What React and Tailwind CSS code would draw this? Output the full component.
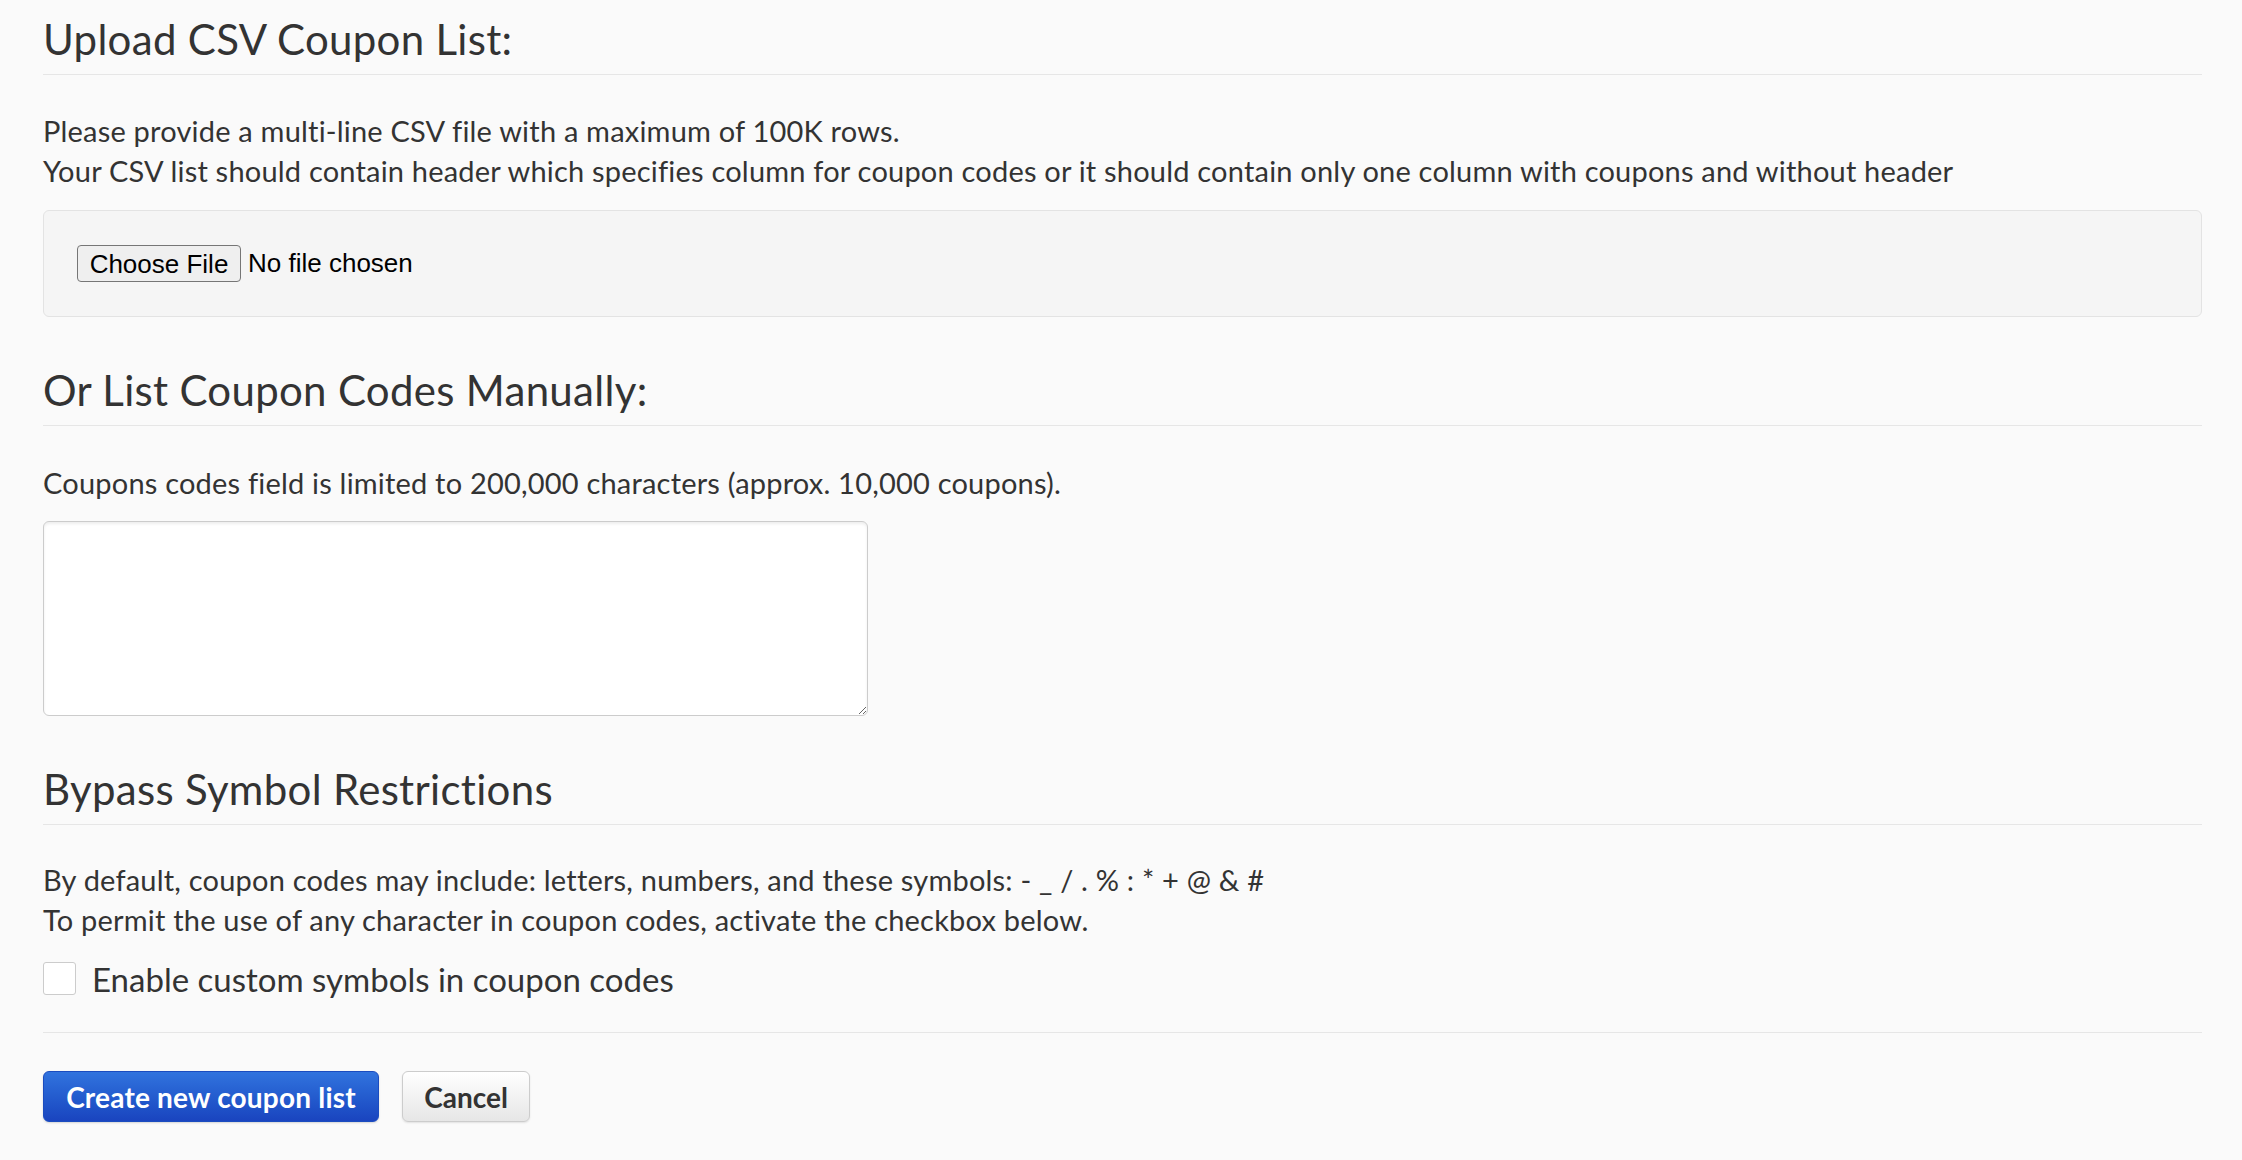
export default function App() {
  const font = { fontFamily: "Lato, 'Open Sans', sans-serif" };
  return (
    <div className="min-h-[1160px] w-full bg-[#fafafa] text-[#333333]" style={font}>
      <div className="pl-[43px] pr-[40px] pt-[17px] pb-[20px]">
        <h2 className="text-[42px] tracking-[0.3px] leading-[44px] font-normal pb-[13px] border-b border-[#e6e6e6]">
          Upload CSV Coupon List:
        </h2>
        <div className="mt-[36px] text-[29px] tracking-[0.2px] leading-[40px]">
          <p>Please provide a multi-line CSV file with a maximum of 100K rows.</p>
          <p>Your CSV list should contain header which specifies column for coupon codes or it should contain only one column with coupons and without header</p>
        </div>
        <div className="mt-[19px] bg-[#f5f5f5] border border-[#e3e3e3] rounded-[6px] px-[33px] py-[33px]">
          <div className="flex items-center h-[39px]" style={{ fontFamily: "'Liberation Sans', Arial, sans-serif" }}>
            <button className="h-[37px] w-[164px] text-[26px] leading-none text-black bg-[#efefef] border border-[#767676] rounded-[4px]">
              Choose File
            </button>
            <span className="ml-[7px] text-[26px] text-black">No file chosen</span>
          </div>
        </div>
        <h2 className="mt-[51px] text-[42px] tracking-[0.3px] leading-[44px] font-normal pb-[13px] border-b border-[#e6e6e6]">
          Or List Coupon Codes Manually:
        </h2>
        <p className="mt-[37px] text-[29px] tracking-[0.2px] leading-[40px]">
          Coupons codes field is limited to 200,000 characters (approx. 10,000 coupons).
        </p>
        <textarea className="block mt-[18px] w-[825px] h-[195px] bg-white border border-[#cccccc] rounded-[6px] shadow-[inset_0_2px_3px_rgba(0,0,0,0.07)] outline-none"></textarea>
        <h2 className="mt-[51px] text-[42px] tracking-[0.3px] leading-[44px] font-normal pb-[13px] border-b border-[#e6e6e6]">
          Bypass Symbol Restrictions
        </h2>
        <div className="mt-[35px] text-[29px] tracking-[0.2px] leading-[40px]">
          <p>By default, coupon codes may include: letters, numbers, and these symbols: - _ / . % : * + @ &amp; #</p>
          <p>To permit the use of any character in coupon codes, activate the checkbox below.</p>
        </div>
        <label className="mt-[22px] flex items-center h-[33px]">
          <span className="w-[33px] h-[33px] bg-white border border-[#cccccc] rounded-[3px] shrink-0"></span>
          <span className="ml-[16px] text-[33px] leading-[40px]">Enable custom symbols in coupon codes</span>
        </label>
        <div className="mt-[37px] border-t border-[#e6e6e6]"></div>
        <div className="mt-[38px] flex items-center gap-[23px]">
          <button className="h-[51px] w-[336px] rounded-[6px] text-white font-bold text-[28px] tracking-[0.2px] bg-gradient-to-b from-[#3173de] to-[#1a44bf] border border-[#1b4cbf] shadow-[0_1px_2px_rgba(0,0,0,0.15)]">
            Create new coupon list
          </button>
          <button className="h-[51px] w-[128px] rounded-[6px] text-[#333333] font-bold text-[28px] bg-gradient-to-b from-[#ffffff] to-[#e6e6e6] border border-[#cccccc] shadow-[0_1px_2px_rgba(0,0,0,0.1)]">
            Cancel
          </button>
        </div>
      </div>
    </div>
  );
}
